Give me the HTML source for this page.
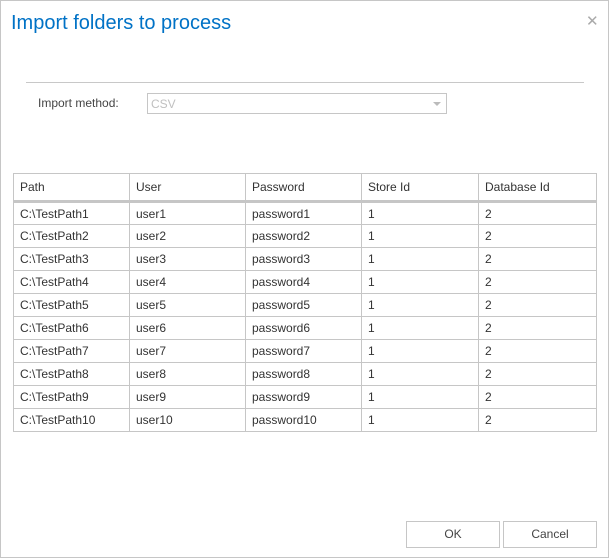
<!DOCTYPE html>
<html><head><style>
*{margin:0;padding:0;box-sizing:border-box}
body{width:610px;height:559px;background:#fff;position:relative;font-family:"Liberation Sans",sans-serif;font-size:12px;color:#333;overflow:hidden}
.dlg{position:absolute;left:0;top:0;width:609px;height:558px;border:1px solid #c6c6c6}
.title{position:absolute;left:11px;top:12px;font-size:20px;color:#0072c6}
.x{position:absolute;left:586px;top:12px;font-size:15px;color:#aaa}
.sep{position:absolute;left:26px;top:82px;width:558px;height:1px;background:#c8c8c8}
.lbl{position:absolute;left:38px;top:96px;color:#444}
.sel{position:absolute;left:147px;top:93px;width:300px;height:21px;border:1px solid #c6c6c6;color:#c0c0c0;padding:3px 3px}
.arr{position:absolute;right:5px;top:8px;border-left:4px solid transparent;border-right:4px solid transparent;border-top:4px solid #bbb}
table{position:absolute;left:13px;top:173px;width:584px;border-collapse:collapse}
td{border:1px solid #c6c6c6;height:23px;padding:0 6px;color:#333}
tr.h td{height:28px;border-bottom:3px solid #c6c6c6}
.btn{position:absolute;top:521px;height:27px;border:1px solid #c6c6c6;text-align:center;line-height:25px;color:#444;font-size:12px}
</style></head><body>
<div class="dlg"></div>
<div class="title">Import folders to process</div>
<div class="x">✕</div>
<div class="sep"></div>
<div class="lbl">Import method:</div>
<div class="sel">CSV<div class="arr"></div></div>
<table>
<tr class="h"><td style="width:116px">Path</td><td style="width:116px">User</td><td style="width:116px">Password</td><td style="width:117px">Store Id</td><td>Database Id</td></tr>
<tr><td>C:\TestPath1</td><td>user1</td><td>password1</td><td>1</td><td>2</td></tr>
<tr><td>C:\TestPath2</td><td>user2</td><td>password2</td><td>1</td><td>2</td></tr>
<tr><td>C:\TestPath3</td><td>user3</td><td>password3</td><td>1</td><td>2</td></tr>
<tr><td>C:\TestPath4</td><td>user4</td><td>password4</td><td>1</td><td>2</td></tr>
<tr><td>C:\TestPath5</td><td>user5</td><td>password5</td><td>1</td><td>2</td></tr>
<tr><td>C:\TestPath6</td><td>user6</td><td>password6</td><td>1</td><td>2</td></tr>
<tr><td>C:\TestPath7</td><td>user7</td><td>password7</td><td>1</td><td>2</td></tr>
<tr><td>C:\TestPath8</td><td>user8</td><td>password8</td><td>1</td><td>2</td></tr>
<tr><td>C:\TestPath9</td><td>user9</td><td>password9</td><td>1</td><td>2</td></tr>
<tr><td>C:\TestPath10</td><td>user10</td><td>password10</td><td>1</td><td>2</td></tr>
</table>
<div class="btn" style="left:406px;width:94px">OK</div>
<div class="btn" style="left:503px;width:94px">Cancel</div>
</body></html>
